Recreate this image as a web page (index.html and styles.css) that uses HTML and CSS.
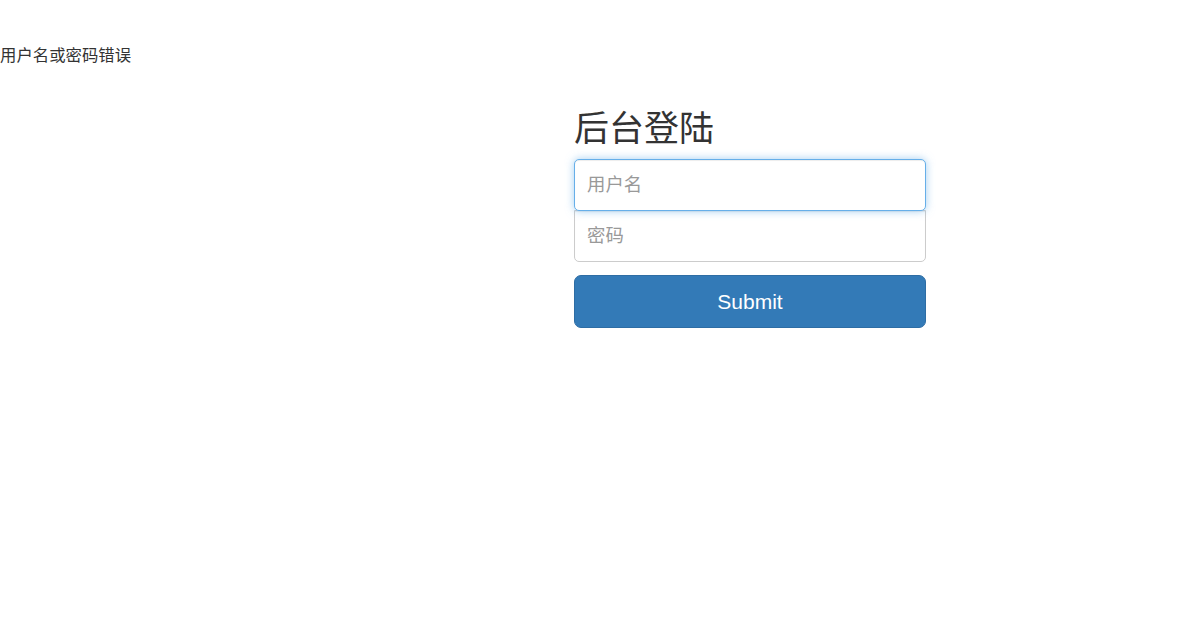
FILE: index.html
```html
<!DOCTYPE html>
<html lang="zh-CN">
<head>
  <meta charset="UTF-8">
  <meta name="viewport" content="width=device-width, initial-scale=1.0">
  <title>后台登陆</title>
  <link rel="stylesheet" href="styles.css">
</head>
<body>
  <p class="error-msg">用户名或密码错误</p>

  <div class="login-wrap">
    <form class="form-signin" action="#" method="post">
      <h2 class="form-signin-heading">后台登陆</h2>
      <input type="text" name="username" class="form-control input-user is-focus" placeholder="用户名" autofocus>
      <input type="password" name="password" class="form-control input-pass" placeholder="密码">
      <button class="btn-submit" type="submit">Submit</button>
    </form>
  </div>
</body>
</html>
```

FILE: styles.css
```css
body {
  margin: 0;
  font-family: "Liberation Sans", "Noto Sans CJK SC", sans-serif;
  color: #333;
  background: #fff;
}
.error-msg {
  margin: 0;
  padding-top: 44px;
  font-size: 16.4px;
  line-height: 23px;
}
.login-wrap {
  padding-left: 574px;
}
.form-signin {
  width: 352px;
  display: flex;
  flex-direction: column;
}
.form-signin-heading {
  margin: 43px 0 11px;
  font-size: 35px;
  font-weight: 400;
  line-height: 38px;
}
.form-control {
  box-sizing: border-box;
  width: 100%;
  height: 52px;
  padding: 0 12px;
  font-family: inherit;
  font-size: 18.4px;
  color: #555;
  background: #fff;
  border: 1px solid #ccc;
  border-radius: 5px;
  box-shadow: inset 0 1px 1px rgba(0, 0, 0, 0.075);
  outline: none;
}
.form-control::placeholder {
  color: #999;
}
.input-user {
  position: relative;
  z-index: 2;
}
.input-pass {
  margin-top: -1px;
  border-top-left-radius: 0;
  border-top-right-radius: 0;
}
.is-focus,
.form-control:focus {
  border-color: #66afe9;
  box-shadow: inset 0 1px 1px rgba(0, 0, 0, 0.075), 0 0 8px rgba(102, 175, 233, 0.6);
}
.btn-submit {
  margin-top: 13px;
  height: 53px;
  font-family: inherit;
  font-size: 21px;
  color: #fff;
  background: #337ab7;
  border: 1px solid #2e6da4;
  border-radius: 7px;
  cursor: pointer;
}
```
